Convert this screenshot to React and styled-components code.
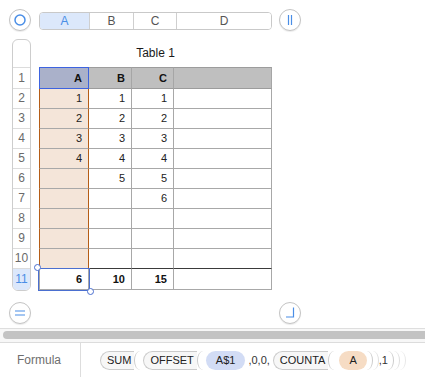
import React from 'react';
import styled, { createGlobalStyle } from 'styled-components';

const GlobalStyle = createGlobalStyle`
  html, body { margin: 0; padding: 0; background: #fff; }
  body { font-family: "Liberation Sans", Arial, sans-serif; }
`;

const Page = styled.div`
  width: 425px;
  height: 377px;
  overflow: hidden;
  display: flex;
  flex-direction: column;
  background: #fff;
`;

const Sheet = styled.div`
  height: 328px;
  box-sizing: border-box;
  padding: 9px 0 0 8px;
  display: grid;
  grid-template-columns: 31px 233px 1fr;
  grid-template-rows: 22px auto auto;
  align-items: start;
`;

const RoundButton = styled.div`
  width: 22px;
  height: 22px;
  box-sizing: border-box;
  border-radius: 50%;
  border: 1px solid #c4c4c4;
  background: #fff;
  box-shadow: 0 1px 1px rgba(0, 0, 0, 0.08);
  margin-left: ${({ $offset }) => $offset || 0}px;
  margin-top: ${({ $top }) => $top || 0}px;
  display: flex;
  align-items: center;
  justify-content: center;
  svg { display: block; }
`;

const ColumnBar = styled.div`
  margin-top: 3px;
  height: 18px;
  box-sizing: border-box;
  border: 1px solid #c9c9c9;
  border-radius: 4px;
  overflow: hidden;
  display: flex;
`;

const ColSeg = styled.div`
  width: ${({ $w }) => ($w ? `${$w}px` : 'auto')};
  flex: ${({ $w }) => ($w ? 'none' : 1)};
  border-right: ${({ $last }) => ($last ? 'none' : '1px solid #cfcfcf')};
  background: ${({ $active }) => ($active ? '#dce8fb' : '#fff')};
  color: ${({ $active }) => ($active ? '#4a8ee6' : '#555')};
  font-size: 12px;
  line-height: 16px;
  text-align: center;
`;

const RowHeaders = styled.div`
  margin: 8px 0 0 4px;
  width: 19px;
  box-sizing: border-box;
  border: 1px solid #cdcdcd;
  border-radius: 6px;
  overflow: hidden;
`;

const RowCap = styled.div`
  height: 28px;
  box-sizing: border-box;
  border-bottom: 1px solid #dcdcdc;
`;

const RowNum = styled.div`
  height: ${({ $h }) => $h}px;
  box-sizing: border-box;
  border-bottom: ${({ $last }) => ($last ? 'none' : '1px solid #dcdcdc')};
  background: ${({ $active }) => ($active ? '#dce8fb' : '#fff')};
  color: ${({ $active }) => ($active ? '#4a8ee6' : '#6a6a6a')};
  font-size: 12px;
  line-height: ${({ $h }) => $h - 1}px;
  text-align: center;
`;

const TableArea = styled.div`
  margin-top: 8px;
`;

const Title = styled.div`
  height: 28px;
  line-height: 28px;
  text-align: center;
  font-size: 12px;
  color: #1a1a1a;
`;

const Grid = styled.div`
  display: grid;
  grid-template-columns: 50px 43px 42px 98px;
`;

const cellBase = `
  box-sizing: border-box;
  font-size: 11px;
  text-align: right;
  padding-right: 6px;
  color: #222;
`;

const HeadCell = styled.div`
  ${cellBase}
  height: 22px;
  line-height: 20px;
  font-weight: bold;
  color: #111;
  background: ${({ $active }) => ($active ? '#aab1ca' : '#bfbfbf')};
  border-top: 1px solid ${({ $active }) => ($active ? '#3d63e0' : '#9c9c9c')};
  border-bottom: 1px solid ${({ $active }) => ($active ? '#3d63e0' : '#9c9c9c')};
  border-right: 1px solid ${({ $active }) => ($active ? '#3d63e0' : '#a6a6a6')};
  border-left: ${({ $first, $active }) =>
    $first ? `1px solid ${$active ? '#3d63e0' : '#a6a6a6'}` : 'none'};
`;

const BodyCell = styled.div`
  ${cellBase}
  height: 20px;
  line-height: 19px;
  background: ${({ $hl }) => ($hl ? '#f4e5d9' : '#fff')};
  border-right: 1px solid ${({ $hl }) => ($hl ? '#b55d16' : '#a8a8a8')};
  border-left: ${({ $first, $hl }) =>
    $first ? `1px solid ${$hl ? '#b55d16' : '#a8a8a8'}` : 'none'};
  border-bottom: 1px solid
    ${({ $hl, $end }) => ($end ? ($hl ? '#b55d16' : '#3a3a3a') : '#a8a8a8')};
`;

const FootCell = styled.div`
  ${cellBase}
  position: relative;
  height: 21px;
  line-height: 20px;
  font-weight: bold;
  color: #111;
  border-right: 1px solid #a8a8a8;
  border-bottom: 1px solid #a8a8a8;
  border-left: ${({ $first }) => ($first ? '1px solid #a8a8a8' : 'none')};
`;

const Selection = styled.div`
  position: absolute;
  top: -1px;
  left: -2px;
  right: -2px;
  bottom: -2px;
  border: 1px solid #4a6fd0;
  z-index: 2;
  pointer-events: none;
`;

const Handle = styled.span`
  position: absolute;
  width: 7px;
  height: 7px;
  box-sizing: border-box;
  border-radius: 50%;
  border: 1px solid #4a6fd0;
  background: #fff;
  ${({ $end }) => ($end ? 'right: -5px; bottom: -5px;' : 'left: -5px; top: -5px;')}
`;

const ScrollBand = styled.div`
  height: 15px;
  box-sizing: border-box;
  border-top: 1px solid #dedede;
  border-bottom: 1px solid #dcdcdc;
  background: #f7f7f7;
  padding: 2px 0 0 3px;
  display: flex;
`;

const Thumb = styled.div`
  flex: 1;
  height: 8px;
  border-radius: 4px 0 0 4px;
  background: #c3c3c3;
`;

const FormulaBar = styled.div`
  height: 34px;
  display: flex;
`;

const FormulaLabel = styled.div`
  width: 81px;
  box-sizing: border-box;
  border-right: 1px solid #dddddd;
  padding-left: 17px;
  display: flex;
  align-items: center;
  font-size: 12px;
  color: #6e6e6e;
`;

const Tokens = styled.div`
  display: flex;
  align-items: center;
  padding-left: 19px;
  font-size: 11px;
  color: #222;
`;

const Func = styled.span`
  display: inline-flex;
  align-items: center;
  margin-right: ${({ $gap }) => $gap ?? 3}px;
`;

const FuncName = styled.span`
  height: 19px;
  box-sizing: border-box;
  display: inline-flex;
  align-items: center;
  border: 1px solid #cbcbcb;
  border-right: none;
  border-radius: 10px 0 0 10px;
  background: #f7f7f7;
  padding: 0 3px 0 6px;
`;

const Paren = styled.span`
  width: 6px;
  height: 19px;
  box-sizing: border-box;
  display: inline-block;
  ${({ $close, $tone }) =>
    $close
      ? `border-right: 1px solid ${$tone || '#cbcbcb'}; border-radius: 0 6px 6px 0 / 0 9.5px 9.5px 0;`
      : `border-left: 1px solid ${$tone || '#cbcbcb'}; border-radius: 6px 0 0 6px / 9.5px 0 0 9.5px;`}
`;

const RefPill = styled.span`
  height: 19px;
  display: inline-flex;
  align-items: center;
  border-radius: 10px;
  padding: 0 ${({ $pad }) => $pad}px;
  background: ${({ $bg }) => $bg};
  margin-right: ${({ $gap }) => $gap || 0}px;
`;

const Plain = styled.span`
  color: #333;
  margin-right: ${({ $gap }) => $gap || 0}px;
`;

const colA = [1, 2, 3, 4, '', '', '', '', ''];
const colB = [1, 2, 3, 4, 5, '', '', '', ''];
const colC = [1, 2, 3, 4, 5, 6, '', '', ''];
const totals = [6, 10, 15, ''];
const headers = ['A', 'B', 'C', ''];

const App = () => {
  const body = colA.map((_, i) => [colA[i], colB[i], colC[i], '']);

  return (
    <Page>
      <GlobalStyle />
      <Sheet>
        <RoundButton $offset={1}>
          <svg width="14" height="14" viewBox="0 0 14 14">
            <circle cx="7" cy="7" r="5" fill="none" stroke="#4a8ee6" strokeWidth="1.5" />
          </svg>
        </RoundButton>

        <ColumnBar>
          <ColSeg $w={49} $active>A</ColSeg>
          <ColSeg $w={43}>B</ColSeg>
          <ColSeg $w={42}>C</ColSeg>
          <ColSeg $last>D</ColSeg>
        </ColumnBar>

        <RoundButton $offset={7}>
          <svg width="20" height="20" viewBox="0 0 20 20">
            <path d="M8.5 5v10M11.5 5v10" stroke="#4a8ee6" strokeWidth="1.2" />
          </svg>
        </RoundButton>

        <RowHeaders>
          <RowCap />
          <RowNum $h={21}>1</RowNum>
          {body.map((_, i) => (
            <RowNum key={i} $h={20}>{i + 2}</RowNum>
          ))}
          <RowNum $h={21} $active $last>11</RowNum>
        </RowHeaders>

        <TableArea>
          <Title>Table 1</Title>
          <Grid>
            {headers.map((h, c) => (
              <HeadCell key={c} $first={c === 0} $active={c === 0}>{h}</HeadCell>
            ))}
            {body.map((row, r) =>
              row.map((v, c) => (
                <BodyCell
                  key={`${r}-${c}`}
                  $first={c === 0}
                  $hl={c === 0}
                  $end={r === body.length - 1}
                >
                  {v}
                </BodyCell>
              ))
            )}
            {totals.map((v, c) => (
              <FootCell key={c} $first={c === 0}>
                {v}
                {c === 0 && (
                  <Selection>
                    <Handle />
                    <Handle $end />
                  </Selection>
                )}
              </FootCell>
            ))}
          </Grid>
        </TableArea>

        <div />

        <RoundButton $offset={1} $top={7}>
          <svg width="20" height="20" viewBox="0 0 20 20">
            <path d="M5 8h10M5 12h10" stroke="#4a8ee6" strokeWidth="1.2" />
          </svg>
        </RoundButton>

        <div />

        <RoundButton $offset={7} $top={7}>
          <svg width="20" height="20" viewBox="0 0 20 20">
            <path d="M13.5 4.5v9.5H6" fill="none" stroke="#4a8ee6" strokeWidth="1.2" />
          </svg>
        </RoundButton>
      </Sheet>

      <ScrollBand>
        <Thumb />
      </ScrollBand>

      <FormulaBar>
        <FormulaLabel>Formula</FormulaLabel>
        <Tokens>
          <Func $gap={3}>
            <FuncName>SUM</FuncName>
            <Paren />
          </Func>
          <Func $gap={3}>
            <FuncName>OFFSET</FuncName>
            <Paren />
          </Func>
          <RefPill $bg="#d2dcf5" $pad={10} $gap={3}>A$1</RefPill>
          <Plain $gap={3}>,0,0,</Plain>
          <Func $gap={5}>
            <FuncName>COUNTA</FuncName>
            <Paren />
          </Func>
          <RefPill $bg="#f6dcc4" $pad={10}>A</RefPill>
          <Paren $close />
          <Paren $close $tone="#dedede" />
          <Plain>,1</Plain>
          <Paren $close />
          <Paren $close $tone="#dedede" />
          <Paren $close $tone="#e8e8e8" />
        </Tokens>
      </FormulaBar>
    </Page>
  );
};

export default App;
